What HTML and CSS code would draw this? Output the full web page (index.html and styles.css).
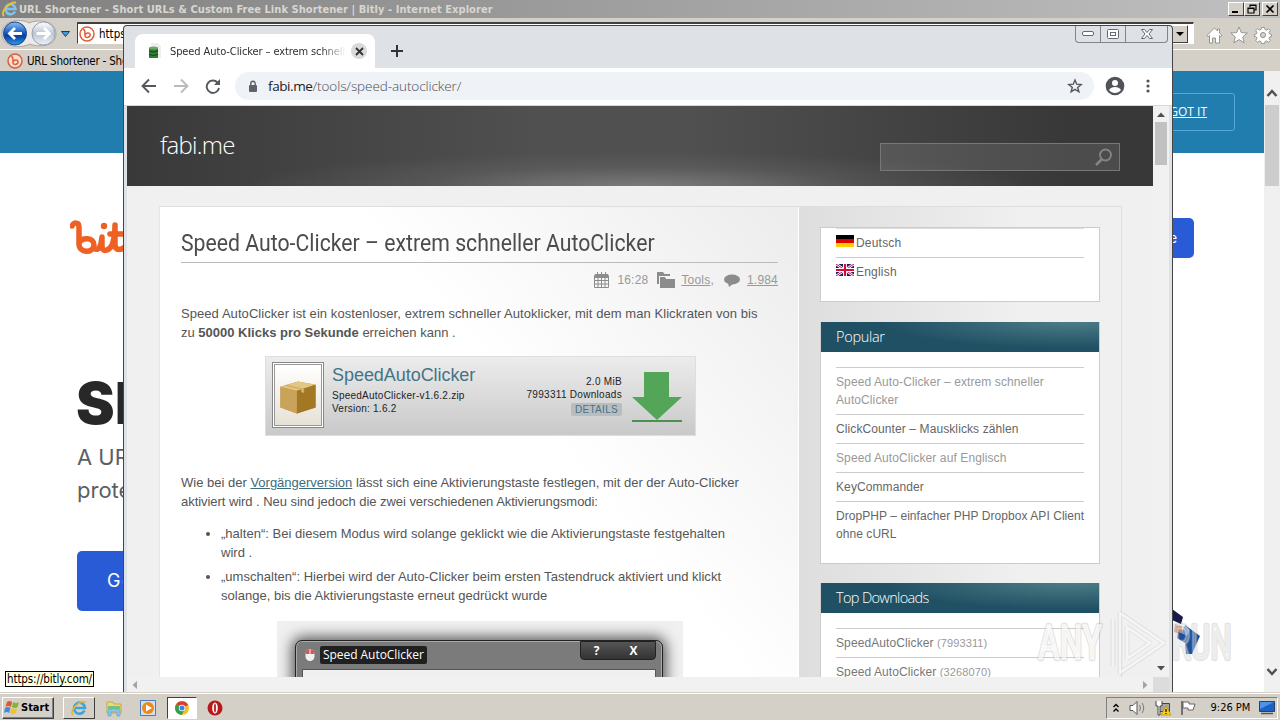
FILE: index.html
```html
<!DOCTYPE html>
<html lang="de">
<head>
    <meta charset="UTF-8">
    <meta name="viewport" content="width=device-width, initial-scale=1.0">
    <title>Speed Auto-Clicker</title>
    <link rel="stylesheet" href="styles.css">
</head>
<body>
<div class="desktop">

    <!-- Internet Explorer -->
    <div class="ie">
        <div class="ie-title">
            <svg width="18" height="18" viewBox="0 0 18 18"><path d="M14 11.500A5 5 0 1 1 14.500 9H5" fill="none" stroke="#7cc4ee" stroke-width="2.600"/><path d="M3 16C-1 13 7 2 15 2.500" fill="none" stroke="#e8c040" stroke-width="1.800"/></svg>
            <span class="ie-caption">URL Shortener - Short URLs &amp; Custom Free Link Shortener | Bitly - Internet Explorer</span>
            <div class="ie-buttons">
                <span><svg width="14" height="12"><path d="M3 9h6" stroke="#000" stroke-width="2"/></svg></span>
                <span><svg width="14" height="12"><path d="M5 4V2h6v5H9M5 2.500h6M3 5h6v5H3zM3 5.500h6" fill="none" stroke="#000" stroke-width="1.200"/></svg></span>
                <span class="gap"><svg width="14" height="12"><path d="M3.500 2.500l7 7M10.500 2.500l-7 7" stroke="#000" stroke-width="1.700"/></svg></span>
            </div>
        </div>
        <div class="ie-bar">
            <svg class="ie-nav" width="72" height="32" viewBox="0 0 72 32">
                <defs>
                    <linearGradient id="blue" x2="0" y2="1"><stop offset="0" stop-color="#8fc0f0"/><stop offset=".45" stop-color="#1d5fc4"/><stop offset=".6" stop-color="#0a3c9c"/><stop offset="1" stop-color="#2ba0f0"/></linearGradient>
                    <linearGradient id="pale" x2="0" y2="1"><stop offset="0" stop-color="#fff"/><stop offset=".5" stop-color="#bcc4d4"/><stop offset="1" stop-color="#eef2f8"/></linearGradient>
                </defs>
                <path d="M2 16C2 0 24 1 29 5C38 1 56 2 56 16C56 30 36 29 30 26C20 31 2 29 2 16Z" fill="#eceae6" stroke="#a8a6a2"/>
                <circle cx="15" cy="15.500" r="11.500" fill="url(#blue)" stroke="#24448c"/>
                <circle cx="43.500" cy="15.500" r="11.500" fill="url(#pale)" stroke="#9aa0ac"/>
                <path d="M22 15.500H10M15 10l-5.500 5.500 5.500 5.500" fill="none" stroke="#fff" stroke-width="2.800"/>
                <path d="M36.500 15.500H49M44 10l5.500 5.500-5.500 5.500" fill="none" stroke="#fff" stroke-width="2.800"/>
                <path d="M61.500 13.500h8l-4 5z" fill="#3aa0e0" stroke="#1c3c64"/>
            </svg>
            <div class="ie-address">
                <svg width="16" height="16" viewBox="0 0 16 16"><circle cx="8" cy="8" r="7" fill="#fff" stroke="#e0603c" stroke-width="1.500"/><path d="M4 4c2-1 2 1 2 6c1 3 6 1 5-2c-1-2-4-1-5 1" fill="none" stroke="#e0603c" stroke-width="1.500"/></svg>
                <span>https://bitly.com/</span>
                <i class="ie-drop"><svg width="14" height="16"><path d="M3 6h8l-4 4z"/></svg></i>
            </div>
            <svg class="ie-tools" width="70" height="20" viewBox="0 0 70 20" fill="#fff" stroke="#8c8c8c" stroke-width=".9">
                <path d="M1 10.500L8.500 3l3 3V4h2v4l2.500 2.500-1.500 1-1-1V18h-4v-5h-3v5h-3v-7.500l-1 1z"/>
                <path d="M33 2l2.300 5.600 6 .4-4.600 3.900 1.500 5.900-5.200-3.200-5.200 3.200 1.500-5.900L24.700 8l6-.4z"/>
                <g transform="translate(57 10)">
                    <path d="M-1.500-7.500h3l.5 2 1.500.6 2-1.300 1.800 1.800-1.300 2 .6 1.400 2 .5v2l-2 .5-.6 1.500 1.300 2-1.800 1.800-2-1.300-1.500.6-.5 2h-3l-.5-2-1.500-.6-2 1.300-1.800-1.800 1.300-2-.6-1.500-2-.5v-2l2-.5.6-1.400-1.300-2 1.800-1.800 2 1.300 1.500-.6z"/>
                    <circle r="2.600" fill="#d4d0c8"/>
                </g>
            </svg>
        </div>
        <div class="ie-tabs">
            <svg width="16" height="16" viewBox="0 0 16 16"><circle cx="8" cy="8" r="7" fill="#f6dfd4" stroke="#d8603c" stroke-width="1.500"/><path d="M4 4c2-1 2 1 2 6c1 3 6 1 5-2c-1-2-4-1-5 1" fill="none" stroke="#e0603c" stroke-width="1.500"/></svg>
            <span>URL Shortener - Short URLs</span>
        </div>
        <div class="ie-body">
            <div class="bitly">
                <div class="cookie"><a class="got-it">GOT IT</a></div>
                <div class="bitly-nav">
                    <svg class="bitly-logo" width="60" height="40" viewBox="0 0 60 40" fill="none" stroke="#ee6123" stroke-width="5.500" stroke-linecap="round" stroke-linejoin="round"><path d="M2 8C4 4 9 4 9 9V26C9 35 23 36 24 27C24 19 12 19 9 25M24 30C29 34 31 28 32 19V28C32 35 39 33 42 27C44 22 45 14 45 7V26C45 34 52 32 56 28M40 16H56"/><circle cx="34" cy="8" r="3.200" fill="#ee6123" stroke="none"/></svg>
                    <span class="signup">e</span>
                </div>
                <h1>Short links</h1>
                <p class="lead">A URL shortener<br>protects you</p>
                <a class="cta">Get Started</a>
                <svg class="shoe" width="32" height="50" viewBox="0 0 32 50"><path d="M0 0l11 8-2 7-9-4z" fill="#171a48"/><path d="M3 15l7 2 1 9-9-3z" fill="#c68a6c"/><path d="M13 16l15 11-8 18h-6l-1-11-8-5 1-6 6 2z" fill="#1c4f9c"/><path d="M12 17l6 4-3 6-5-3z" fill="#6c98d8"/></svg>
            </div>
            <div class="ie-scroll">
                <svg width="16" height="34"><path d="M3.500 25l4.500-5 4.500 5" fill="none" stroke="#505050" stroke-width="2.500"/></svg>
                <i></i>
                <svg class="down" width="16" height="28"><path d="M3.500 5l4.500 5 4.500-5" fill="none" stroke="#505050" stroke-width="2.500"/></svg>
            </div>
        </div>
        <div class="status-tip">https://bitly.com/</div>
    </div>

    <!-- Chrome -->
    <div class="chrome">
        <div class="win-buttons">
            <span><svg width="12" height="6"><rect x=".5" y=".5" width="11" height="4" rx="1.500"/></svg></span>
            <span><svg width="12" height="10"><rect x=".5" y=".5" width="11" height="9" rx="1"/><rect x="3.500" y="3.500" width="5" height="3"/></svg></span>
            <span class="wide"><svg width="12" height="10"><path d="M.5.500h3L6 3.500 8.500.500h3L8 5l3.500 4.500h-3L6 6.500 3.500 9.500h-3L4 5z"/></svg></span>
        </div>
        <div class="tabstrip">
            <div class="tab">
                <svg width="14" height="16" viewBox="0 0 14 16"><path d="M3 0h7l3 3v12H3z" fill="#efefea"/><path d="M1 5h9v10H1z" fill="#2f7d32"/><ellipse cx="5.500" cy="5" rx="4.500" ry="1.500" fill="#69aa62"/><path d="M1 8q4.500 2 9 0M1 11.500q4.500 2 9 0" fill="none" stroke="#14411a"/></svg>
                <span class="tab-title">Speed Auto-Clicker – extrem schneller</span>
                <span class="tab-close"><svg width="9" height="9"><path d="M1 1l7 7M8 1L1 8" stroke="#333" stroke-width="1.800"/></svg></span>
            </div>
            <svg class="new-tab" width="12" height="12"><path d="M6 0v12M0 6h12" stroke="#333" stroke-width="2"/></svg>
        </div>
        <div class="toolbar">
            <svg width="80" height="16" viewBox="0 0 80 16" fill="none" stroke-width="1.900">
                <path d="M15 8H2M8 1.500L1.500 8 8 14.500" stroke="#55585c"/>
                <path d="M33 8h13M40 1.500L46.500 8 40 14.500" stroke="#b8babd"/>
                <path d="M76.500 4.500A6.200 6.200 0 1 0 78 10" stroke="#55585c"/><path d="M79 1v6h-6z" fill="#55585c"/>
            </svg>
            <div class="omnibox">
                <svg width="10" height="13"><rect x="1" y="5" width="8" height="7" rx="1" fill="#5f6368"/><path d="M2.800 5V3.500a2.200 2.200 0 0 1 4.400 0V5" fill="none" stroke="#5f6368" stroke-width="1.400"/></svg>
                <span class="url"><b>fabi.me</b>/tools/speed-autoclicker/</span>
                <svg class="star" width="16" height="16" viewBox="0 0 16 16"><path d="M8 2l1.700 4.200 4.500.3-3.500 2.900 1.200 4.400L8 11.300l-3.900 2.500 1.200-4.400L1.800 6.500l4.500-.3z" fill="none" stroke="#55585c" stroke-width="1.400"/></svg>
            </div>
            <svg width="20" height="20" viewBox="0 0 20 20"><circle cx="10" cy="10" r="9.300" fill="#505357"/><circle cx="10" cy="7" r="3" fill="#fff"/><path d="M4 14c2-4 10-4 12 0-3 4-9 4-12 0z" fill="#fff"/></svg>
            <svg class="menu" width="4" height="16" fill="#505357"><circle cx="2" cy="3" r="1.600"/><circle cx="2" cy="8" r="1.600"/><circle cx="2" cy="13" r="1.600"/></svg>
        </div>

        <div class="view">
            <div class="page">
                <header>
                    <span class="site-name">fabi.me</span>
                    <div class="search"><svg width="20" height="20" viewBox="0 0 20 20" fill="none" stroke="#858585"><circle cx="11.500" cy="8" r="5.500" stroke-width="1.800"/><path d="M8 12L2 18" stroke-width="2.500"/></svg></div>
                </header>
                <div class="container">
                    <main>
                        <h2><span>Speed Auto-Clicker – extrem schneller AutoClicker</span></h2>
                        <div class="meta">
                            <svg width="15" height="17" viewBox="0 0 15 17" fill="none" stroke="#8c8c8c"><path d="M1 2.500h13v3H1z" fill="#8c8c8c"/><path d="M.5 3.500v12h14v-12M.5 8.500h14M.5 12h14M4 6v10M7.500 6v10M11 6v10M3.500 0v3M7.500 0v3M11.500 0v3"/></svg>
                            <span class="time">16:28</span>
                            <svg width="18" height="17" viewBox="0 0 18 17" fill="#8c8c8c"><path d="M0 0h6l1.500 2H13v2H2v8H0z"/><path d="M3 5h5l1 2h9v9H3z"/></svg>
                            <span class="cat"><a>Tools</a>,</span>
                            <svg width="16" height="13" viewBox="0 0 16 13" fill="#8c8c8c"><ellipse cx="8" cy="5.500" rx="8" ry="5"/><path d="M4 9h6l-5 4z"/></svg>
                            <a class="count">1.984</a>
                        </div>
                        <p class="intro"><span class="l1">Speed AutoClicker ist ein kostenloser, extrem schneller Autoklicker, mit dem man Klickraten von bis</span><br>zu <b>50000 Klicks pro Sekunde</b> erreichen kann .</p>
                        <div class="download">
                            <div class="thumb"><svg width="44" height="58" viewBox="0 0 44 58"><path d="M5 21l17-5 17 3v22l-18 6-16-6z" fill="#b78c3c"/><path d="M5 21l16 4v22L5 41z" fill="#c9a35a"/><path d="M5 21l17-5 17 3-18 6z" fill="#e2c683"/><path d="M21 25l18-6v22l-18 6z" fill="#a37825"/><path d="M11 19l17 4v4l-3-1v-2l-16-4z" fill="#d2b069"/></svg></div>
                            <div class="file">
                                <h3>SpeedAutoClicker</h3>
                                <span class="zip">SpeedAutoClicker-v1.6.2.zip</span>
                                <span class="ver">Version: 1.6.2</span>
                            </div>
                            <div class="stats">
                                <span>2.0 MiB</span>
                                <span>7993311 Downloads</span>
                                <a>DETAILS</a>
                            </div>
                            <svg width="50" height="52" viewBox="0 0 50 52"><path d="M12 1h25v25h13L25 49 0 26h12z" fill="#53a557"/><path d="M0 50h50" stroke="#4c9150" stroke-width="2"/></svg>
                        </div>
                        <p class="prev">Wie bei der <a>Vorgängerversion</a> lässt sich eine Aktivierungstaste festlegen, mit der der Auto-Clicker<br><span class="l2">aktiviert wird . Neu sind jedoch die zwei verschiedenen Aktivierungsmodi:</span></p>
                        <ul>
                            <li>„halten“: Bei diesem Modus wird solange geklickt wie die Aktivierungstaste festgehalten<br>wird .</li>
                            <li>„umschalten“: Hierbei wird der Auto-Clicker beim ersten Tastendruck aktiviert und klickt<br>solange, bis die Aktivierungstaste erneut gedrückt wurde</li>
                        </ul>
                        <div class="shot">
                            <div class="shot-win">
                                <div class="shot-title">
                                    <svg width="12" height="14" viewBox="0 0 12 14"><rect x="1.500" y="1" width="9" height="12" rx="4.500" fill="#f4f0ee"/><path d="M1.500 6V4q1-3 4-3v5zM6.500 1q3 0 4 3v2h-4z" fill="#cc5c5c"/></svg>
                                    <span>Speed AutoClicker</span>
                                    <div class="shot-buttons"><i>?</i><i>X</i></div>
                                </div>
                                <div class="shot-body"></div>
                            </div>
                        </div>
                    </main>
                    <aside>
                        <div class="widget langs">
                            <a><svg width="18" height="12"><path d="M0 0h18v4H0z"/><path d="M0 4h18v4H0z" fill="#d00"/><path d="M0 8h18v4H0z" fill="#fc0"/></svg>Deutsch</a>
                            <a><svg width="18" height="12" viewBox="0 0 18 12"><path d="M0 0h18v12H0z" fill="#1c1c6c"/><path d="M0 0l18 12M18 0L0 12" stroke="#fff" stroke-width="2.600"/><path d="M0 0l18 12M18 0L0 12" stroke="#d0103c"/><path d="M9 0v12M0 6h18" stroke="#fff" stroke-width="4"/><path d="M9 0v12M0 6h18" stroke="#d0103c" stroke-width="2.200"/></svg>English</a>
                        </div>
                        <div class="widget">
                            <h4>Popular</h4>
                            <a class="visited">Speed Auto-Clicker – extrem schneller<br>AutoClicker</a>
                            <a>ClickCounter – Mausklicks zählen</a>
                            <a class="visited">Speed AutoClicker auf Englisch</a>
                            <a>KeyCommander</a>
                            <a class="tight">DropPHP – einfacher PHP Dropbox API Client<br>ohne cURL</a>
                        </div>
                        <div class="widget downloads">
                            <h4>Top Downloads</h4>
                            <a>SpeedAutoClicker <small>(7993311)</small></a>
                            <a>Speed AutoClicker <small>(3268070)</small></a>
                        </div>
                    </aside>
                </div>
            </div>
            <div class="vscroll">
                <svg width="16" height="16"><path d="M4 11h8L8 6.500z" fill="#505050"/></svg>
                <i></i>
                <svg class="down" width="16" height="16"><path d="M4 5h8L8 9.500z" fill="#505050"/></svg>
            </div>
            <div class="hscroll">
                <svg width="16" height="15"><path d="M10 4v8L5.500 8z" fill="#a3a3a3"/></svg>
                <svg width="16" height="15"><path d="M6 4v8l4.500-4z" fill="#a3a3a3"/></svg>
            </div>
            <div class="corner"></div>
        </div>
    </div>

    <!-- Taskbar -->
    <div class="taskbar">
        <div class="start">
            <svg width="17" height="17" viewBox="0 0 17 17"><path d="M3 3q3-2 5 0L7 8Q4 6 1.500 8z" fill="#e4552c"/><path d="M9 3q3 2 6 0l-1.500 5Q11 10 8 8z" fill="#7cb83c"/><path d="M1 9q3-2 5.500 0L5 14Q3 12 0 14z" fill="#3c8ce0"/><path d="M7.500 9q3 2 5.500 0l-1 5q-3 2-6 0z" fill="#f4c030"/></svg>
            <b>Start</b>
        </div>
        <div class="task raised"><svg width="18" height="18" viewBox="0 0 18 18"><path d="M14.500 11.500A5.500 5.500 0 1 1 15 9H5" fill="none" stroke="#3ca4dc" stroke-width="2.600"/><path d="M3 16C-1 13 8 1 16 3" fill="none" stroke="#e0b440" stroke-width="1.600"/></svg></div>
        <div class="task"><svg width="18" height="18" viewBox="0 0 18 18"><path d="M2 3h6l1 2h7v9H2z" fill="#f0d878" stroke="#c8a848"/><path d="M3 7h12v3H3z" fill="#74c478"/><path d="M3 17v-6q6-3 12 0v6h-3v-4H6v4z" fill="#84c8f0" stroke="#5a9ccc" stroke-width=".6"/></svg></div>
        <div class="task"><svg width="16" height="16" viewBox="0 0 16 16"><path d="M.5.500h15v15H.5z" fill="#cfe2f4" stroke="#4a7cb8"/><circle cx="8" cy="8" r="6" fill="#f08818"/><path d="M6 4.500l6 3.500-6 3.500z" fill="#fff"/></svg></div>
        <div class="task pressed"><svg width="14" height="14" viewBox="0 0 14 14"><circle cx="7" cy="7" r="7" fill="#f4c020"/><path d="M7 7L1 3.500A7 7 0 0 1 13.200 4z" fill="#dc3c30"/><path d="M7 7L1 3.500A7 7 0 0 0 6.500 14l3-5z" fill="#2ca050"/><circle cx="7" cy="7" r="3.200" fill="#fff"/><circle cx="7" cy="7" r="2.500" fill="#4080e8"/></svg></div>
        <div class="task opera"><svg width="16" height="16" viewBox="0 0 16 16"><circle cx="8" cy="8" r="7.500" fill="#b81818"/><ellipse cx="8" cy="8" rx="2.800" ry="5.500" fill="#fff"/><ellipse cx="8" cy="8" rx="1.100" ry="4.500" fill="#c03030"/></svg></div>
        <div class="tray">
            <svg width="8" height="12"><path d="M1.500 5L4 2.500 6.500 5M1.500 9.500L4 7l2.500 2.500" fill="none" stroke="#000" stroke-width="1.400"/></svg>
            <svg width="18" height="16" fill="#fff" stroke="#555"><path d="M1 5.500h3l4-4v13l-4-4H1z"/><path d="M10.500 5q2 3 0 6M13 3q3.500 5 0 10" fill="none" stroke="#777"/></svg>
            <svg width="16" height="16"><path d="M4.500 3.500h10v8h-10z" fill="#a8a8a0" stroke="#444"/><path d="M1 1v5h2v9h2V6h2V1" fill="#fff" stroke="#444"/><path d="M11 6l5 9H6z" fill="#f8d020" stroke="#a88400" stroke-width=".6"/><path d="M11 9v3M11 13v1" stroke="#000" stroke-width="1.200"/></svg>
            <svg width="16" height="16"><path d="M2 1v14" stroke="#555" stroke-width="1.500"/><path d="M3 2h6v2h6l-2 6H8V8H3z" fill="#fff" stroke="#666"/></svg>
            <span>9:26 PM</span>
            <svg width="16" height="14"><path d="M.5.500h15v10H.5z" fill="#1c62c4" stroke="#28406c"/><path d="M1 1h14L1 8z" fill="#4c94e4"/><path d="M2 12.500h12" stroke="#555" stroke-width="1.500"/></svg>
        </div>
    </div>

    <svg class="watermark" width="200" height="68" viewBox="0 0 200 68">
        <g fill="none" stroke="#888" stroke-opacity=".22" stroke-width="4.500" stroke-linejoin="round">
            <text x="3" y="50" textLength="64" lengthAdjust="spacingAndGlyphs">ANY</text>
            <text x="137" y="50" textLength="60" lengthAdjust="spacingAndGlyphs">RUN</text>
            <path d="M78 10v47M85 4v60l44-30-44-30zM92 18v32l23-16z"/>
        </g>
        <g fill="#fff" fill-opacity=".6" stroke="#fff" stroke-opacity=".7" stroke-width="1.500">
            <text x="3" y="50" textLength="64" lengthAdjust="spacingAndGlyphs">ANY</text>
            <text x="137" y="50" textLength="60" lengthAdjust="spacingAndGlyphs" fill-opacity=".3" stroke-opacity=".35">RUN</text>
            <path d="M78 10v47M85 4v60l44-30-44-30zM92 18v32l23-16z" fill-opacity=".1" stroke-width="3"/>
        </g>
    </svg>
</div>
</body>
</html>
```
FILE: styles.css
```css
* {
    box-sizing: border-box;
}
body {
    margin: 0;
    font-family: "DejaVu Sans Condensed", "DejaVu Sans", sans-serif;
    font-stretch: condensed;
    font-size: 11px;
    overflow: hidden;
}
svg {
    display: block;
    flex-shrink: 0;
}
.desktop {
    position: relative;
    width: 1280px;
    height: 720px;
    overflow: hidden;
    display: flex;
    flex-direction: column;
    background: #fff;
}

/* Internet Explorer */
.ie {
    height: 692px;
    display: flex;
    flex-direction: column;
    background: #d4d0c8;
}
.ie-title {
    height: 18px;
    display: flex;
    align-items: center;
    padding: 0 2px 0 1px;
    background: linear-gradient(90deg, #808080, #c0c0c0);
    color: #d9d6cf;
    font-weight: bold;
}
.ie-caption {
    flex: 1;
    white-space: nowrap;
    letter-spacing: 0.06px;
}
.ie-buttons {
    display: flex;
}
.ie-buttons span {
    width: 16px;
    height: 14px;
    background: #d4d0c8;
    border: 1px solid #404040;
    border-top-color: #fff;
    border-left-color: #fff;
}
.ie-buttons .gap {
    margin-left: 2px;
}
.ie-bar {
    height: 31px;
    display: flex;
    align-items: center;
}
.ie-nav {
    margin-right: 5px;
}
.ie-address {
    width: 1117px;
    height: 22px;
    margin-bottom: 1px;
    padding-left: 1px;
    display: flex;
    align-items: center;
    gap: 4px;
    background: #fff;
    border: 1px solid #fff;
    border-top: 2px solid #404040;
    border-left: 1px solid #404040;
    font-size: 11.5px;
}
.ie-drop {
    margin-left: auto;
    margin-right: 5px;
    width: 16px;
    height: 18px;
    background: #d4d0c8;
    border: 1px solid #404040;
    border-top-color: #fff;
    border-left-color: #fff;
}
.ie-tools {
    margin-left: 12px;
    margin-top: 2px;
}
.ie-tabs {
    height: 22px;
    display: flex;
    align-items: center;
    gap: 4px;
    padding-left: 7px;
    border-top: 1px solid #fff;
    font-size: 11.5px;
    letter-spacing: -0.2px;
}
.ie-body {
    flex: 1;
    display: flex;
    min-height: 0;
}
.bitly {
    width: 1264px;
    background: #fff;
    font-family: Inter, "Open Sans", sans-serif;
    font-stretch: normal;
    overflow: hidden;
}
.cookie {
    height: 82px;
    display: flex;
    justify-content: flex-end;
    align-items: center;
    padding-right: 29px;
    background: #217dae;
}
.got-it {
    width: 110px;
    height: 38px;
    padding-right: 27px;
    line-height: 36px;
    text-align: right;
    color: #fff;
    border: 1px solid #55a8dc;
    border-radius: 3px;
    font-family: "Open Sans", sans-serif;
    font-size: 12px;
    text-decoration: underline;
}
.bitly-nav {
    height: 114px;
    padding: 65px 70px 0 70px;
    display: flex;
    justify-content: space-between;
    align-items: flex-start;
}
.signup {
    width: 120px;
    height: 40px;
    padding-right: 17px;
    line-height: 40px;
    text-align: right;
    background: #2a5bd7;
    color: #fff;
    border-radius: 5px;
    font-size: 13px;
}
.bitly h1 {
    margin: 96px 0 0 76px;
    font-size: 58px;
    line-height: 80px;
    font-weight: 900;
    color: #282828;
}
.lead {
    margin: -2px 0 0 77px;
    font-size: 22px;
    line-height: 33px;
    color: #5c5f64;
}
.cta {
    display: block;
    width: 200px;
    height: 60px;
    margin: 44px 0 0 77px;
    padding-left: 30px;
    line-height: 60px;
    background: #2a5bd7;
    color: #fff;
    border-radius: 5px;
    font-size: 18px;
    letter-spacing: 1.5px;
}
.shoe {
    margin: -2px 0 0 1172px;
}
.ie-scroll {
    width: 16px;
    display: flex;
    flex-direction: column;
    background: #f0f0f0;
}
.ie-scroll i {
    height: 81px;
    margin: 0 1px;
    background: #cdcdcd;
}
.down {
    margin-top: auto;
}
.status-tip {
    position: absolute;
    left: 5px;
    top: 671px;
    width: 89px;
    height: 16px;
    line-height: 14px;
    text-align: center;
    background: #ffffe1;
    border: 1px solid #000;
    font-size: 11.5px;
    letter-spacing: -0.1px;
    white-space: nowrap;
}

/* Chrome window */
.chrome {
    position: absolute;
    left: 123px;
    top: 25px;
    width: 1050px;
    height: 667px;
    display: flex;
    flex-direction: column;
    background: #dee1e6;
    border: 1px solid #454545;
    border-bottom: 0;
    border-radius: 4px 4px 0 0;
}
.win-buttons {
    position: absolute;
    right: 4px;
    top: 0;
    height: 17px;
    display: flex;
    border: 1px solid #80858c;
    border-top: 0;
    border-radius: 0 0 4px 4px;
}
.win-buttons span {
    width: 25px;
    display: flex;
    align-items: center;
    justify-content: center;
    border-right: 1px solid #80858c;
}
.win-buttons .wide {
    width: 41px;
    border: 0;
}
.win-buttons svg {
    fill: #fff;
    stroke: #666a70;
}
.tabstrip {
    height: 42px;
    display: flex;
    padding: 8px 0 0 11px;
}
.tab {
    width: 240px;
    display: flex;
    align-items: center;
    padding: 0 8px 0 13px;
    background: #fff;
    border-radius: 8px 8px 0 0;
}
.tab-title {
    width: 176px;
    margin-left: 8px;
    overflow: hidden;
    white-space: nowrap;
    color: #2c2f33;
    letter-spacing: -0.1px;
    -webkit-mask-image: linear-gradient(90deg, #000 86%, transparent);
    mask-image: linear-gradient(90deg, #000 86%, transparent);
}
.tab-close {
    width: 16px;
    height: 16px;
    margin-left: 5px;
    display: flex;
    align-items: center;
    justify-content: center;
    flex-shrink: 0;
    background: #dadada;
    border-radius: 50%;
}
.new-tab {
    margin: 11px 0 0 16px;
}
.toolbar {
    height: 37px;
    display: flex;
    align-items: center;
    padding: 0 0 1px 17px;
    background: #fff;
}
.omnibox {
    width: 859px;
    height: 28px;
    margin: 0 11px 0 14px;
    padding: 0 11px 0 13px;
    display: flex;
    align-items: center;
    background: #eff2f6;
    border-radius: 14px;
}
.url {
    margin-left: 10px;
    font-family: "Open Sans", sans-serif;
    font-stretch: normal;
    font-size: 13.5px;
    font-weight: 300;
    color: #4a4e53;
    letter-spacing: -0.08px;
}
.url b {
    font-weight: 400;
    letter-spacing: -0.4px;
    color: #202124;
}
.star {
    margin-left: auto;
}
.menu {
    margin-left: 21px;
}
.view {
    flex: 1;
    display: grid;
    grid-template-columns: 1026px 16px;
    grid-template-rows: 571px 15px;
    padding: 0 3px;
    border-top: 1px solid #d5d7da;
}
.vscroll {
    display: flex;
    flex-direction: column;
    background: #f1f1f1;
}
.vscroll i {
    height: 43px;
    margin: 0 2px;
    background: #c1c1c1;
}
.hscroll {
    display: flex;
    justify-content: space-between;
    background: #f1f1f1;
}
.corner {
    background: #dcdcdc;
}

/* fabi.me */
.page {
    overflow: hidden;
    background: #f0f0f0;
    font-family: "Liberation Sans", Arial, sans-serif;
    font-stretch: normal;
    color: #555;
}
header {
    height: 80px;
    display: flex;
    justify-content: space-between;
    padding: 0 33px;
    background: radial-gradient(ellipse 400px 34px at 50% 100%, rgba(150, 150, 150, 0.6), rgba(120, 120, 120, 0.25) 55%, transparent), linear-gradient(90deg, #393939, #505050 40%, #505050 55%, #383838 92%);
}
.site-name {
    padding-top: 25px;
    line-height: 28px;
    font-family: "Open Sans", sans-serif;
    font-weight: 300;
    font-size: 24px;
    letter-spacing: -0.7px;
    color: #fff;
}
.search {
    width: 240px;
    height: 28px;
    margin-top: 37px;
    padding: 3px 5px;
    display: flex;
    justify-content: flex-end;
    background: rgba(255, 255, 255, 0.1);
    border: 1px solid #777;
}
.container {
    width: 963px;
    height: 500px;
    margin: 20px 0 0 32px;
    display: flex;
    border: 1px solid #dedede;
    border-left-color: #e6e6e6;
    background: linear-gradient(90deg, #dedede 67%, #f0f0f0 90%);
}
main {
    width: 639px;
    padding: 20px 20px 0 21px;
    border-right: 1px solid #fff;
    background: linear-gradient(50deg, #fff 58%, #ececec);
    font-size: 13px;
    line-height: 19px;
}
h2 {
    margin: 0 0 8px;
    height: 36px;
    line-height: 32px;
    border-bottom: 1px solid #bbb;
    font-family: Roboto, sans-serif;
    font-weight: 400;
    font-size: 24px;
    white-space: nowrap;
    color: #4c4c4c;
}
h2 span {
    display: inline-block;
    transform: scaleX(0.885);
    transform-origin: left;
}
.meta {
    height: 19px;
    display: flex;
    align-items: center;
    justify-content: flex-end;
    color: #999;
    font-size: 12px;
    letter-spacing: 0.2px;
}
.meta a {
    text-decoration: underline;
}
.time {
    margin: 0 9px 0 8px;
}
.cat {
    margin: 0 10px 0 6px;
}
.count {
    margin-left: 7px;
}
main p {
    margin: 14px 0;
    white-space: nowrap;
}
.l1 {
    letter-spacing: 0.065px;
}
.l2 {
    letter-spacing: -0.05px;
}
main p a {
    color: #3d6c80;
    text-decoration: underline;
}
.download {
    width: 431px;
    height: 80px;
    margin: 0 0 37px 84px;
    padding: 5px 13px 0 6px;
    display: flex;
    background: linear-gradient(#ececec, #c9c9c9);
    border: 1px solid #dedede;
    color: #222;
    font-size: 10px;
    line-height: 13px;
}
.thumb {
    width: 52px;
    height: 66px;
    padding: 1px;
    border: 1px solid #888;
    background: #fff;
}
.thumb svg {
    width: 48px;
    height: 62px;
    border: 1px solid #999;
    background: linear-gradient(#fff, #e6e1d6);
}
.file {
    flex: 1;
    margin-left: 8px;
    display: flex;
    flex-direction: column;
    letter-spacing: 0.24px;
}
.file h3 {
    margin: 1px 0 2px;
    line-height: 24px;
    font-size: 18px;
    font-weight: normal;
    letter-spacing: -0.05px;
    color: #447488;
}
.stats {
    display: flex;
    flex-direction: column;
    align-items: flex-end;
    padding-top: 13px;
    margin-right: 10px;
    letter-spacing: 0.3px;
}
.stats a {
    margin-top: 2px;
    padding: 0 4px;
    background: #b9bdc0;
    border-radius: 2px;
    color: #447488;
}
.download > svg {
    margin-top: 9px;
}
ul {
    margin: -1px 0 0;
    padding-left: 40px;
    white-space: nowrap;
    letter-spacing: 0.02px;
}
li {
    margin-bottom: 5px;
}
.shot {
    width: 406px;
    height: 80px;
    margin: 16px 0 0 96px;
    padding: 19px 20px 0 18px;
    background: #f0f0f0;
    overflow: hidden;
}
.shot-win {
    height: 80px;
    padding: 0 6px;
    background: #7b7b7b;
    border: 1px solid #222;
    border-radius: 7px 7px 0 0;
    box-shadow: 0 0 14px 3px rgba(0, 0, 0, 0.65), inset 0 0 0 1px #aaa;
}
.shot-title {
    height: 28px;
    display: flex;
    align-items: center;
    padding-left: 2px;
    font-family: "Open Sans", sans-serif;
    font-size: 12px;
    letter-spacing: -0.05px;
    color: #fff;
}
.shot-title span {
    margin-left: 4px;
    padding: 0 3px;
    line-height: 18px;
    background: #202020;
    border-radius: 2px;
}
.shot-buttons {
    width: 76px;
    height: 19px;
    margin: 0 0 auto auto;
    padding: 0 6px 0 0;
    display: flex;
    background: linear-gradient(#555, #333);
    border: 1px solid #222;
    border-radius: 0 0 4px 4px;
}
.shot-buttons i {
    flex: 1;
    text-align: center;
    line-height: 18px;
    font-style: normal;
    font-weight: bold;
}
.shot-buttons i:first-child {
    padding-right: 6px;
}
.shot-body {
    height: 50px;
    background: #f0f0f0;
    border: 1px solid #555;
}
aside {
    width: 300px;
    padding: 20px 0 0 21px;
    font-size: 12px;
    line-height: 18px;
}
.widget {
    width: 280px;
    margin-bottom: 20px;
    padding: 0 15px 15px;
    background: #fff;
    border: 1px solid #ccc;
}
.widget a {
    display: block;
    padding: 5px 0;
    border-top: 1px solid #ccc;
    white-space: nowrap;
    color: #666;
    letter-spacing: 0.1px;
}
.widget a.visited {
    color: #999;
}
.widget a.tight {
    letter-spacing: 0.06px;
}
.widget small {
    font-size: 11px;
    color: #999;
}
.widget h4 {
    margin: -1px -15px 15px;
    height: 30px;
    padding-left: 15px;
    line-height: 30px;
    background: radial-gradient(ellipse 190px 26px at 90% 0, #4b7c87, transparent), #205063;
    color: #fff;
    font-family: "Open Sans", sans-serif;
    font-weight: 300;
    font-size: 14.5px;
    letter-spacing: -0.3px;
}
.downloads {
    margin-top: -1px;
}
.downloads h4 {
    letter-spacing: -0.65px;
}
.downloads a {
    color: #777;
}
.langs {
    height: 75px;
    padding-top: 0;
}
.langs a {
    display: flex;
    gap: 2px;
    letter-spacing: 0.2px;
}
.langs a:first-child {
    border-top-color: #ddd;
}
.langs svg {
    margin-top: 1px;
}

/* Taskbar */
.taskbar {
    height: 28px;
    display: flex;
    align-items: center;
    gap: 4px;
    padding: 2px 2px 0;
    background: #d4d0c8;
    border-top: 1px solid #d4d0c8;
    box-shadow: inset 0 1px #fff;
}
.start {
    width: 52px;
    height: 22px;
    margin-right: 5px;
    padding-left: 1px;
    display: flex;
    align-items: center;
    border: 1px solid #404040;
    border-top-color: #fff;
    border-left-color: #fff;
    box-shadow: inset -1px -1px #808080;
}
.task {
    width: 30px;
    height: 22px;
    display: flex;
    align-items: center;
    justify-content: center;
    border: 1px solid transparent;
}
.raised {
    width: 32px;
    border-color: #fff #404040 #404040 #fff;
}
.pressed {
    background: #fff;
    border-color: #404040 #fff #fff #404040;
}
.opera {
    padding-right: 3px;
}
.tray {
    width: 172px;
    height: 22px;
    margin-left: auto;
    padding: 0 2px 0 5px;
    display: flex;
    align-items: center;
    justify-content: space-between;
    border: 1px solid #808080;
    border-right-color: #fff;
    border-bottom-color: #fff;
}
.tray span {
    padding-left: 6px;
    white-space: nowrap;
}

.watermark {
    position: absolute;
    left: 1035px;
    top: 609px;
    font-family: Roboto, sans-serif;
    font-size: 49px;
}
```
